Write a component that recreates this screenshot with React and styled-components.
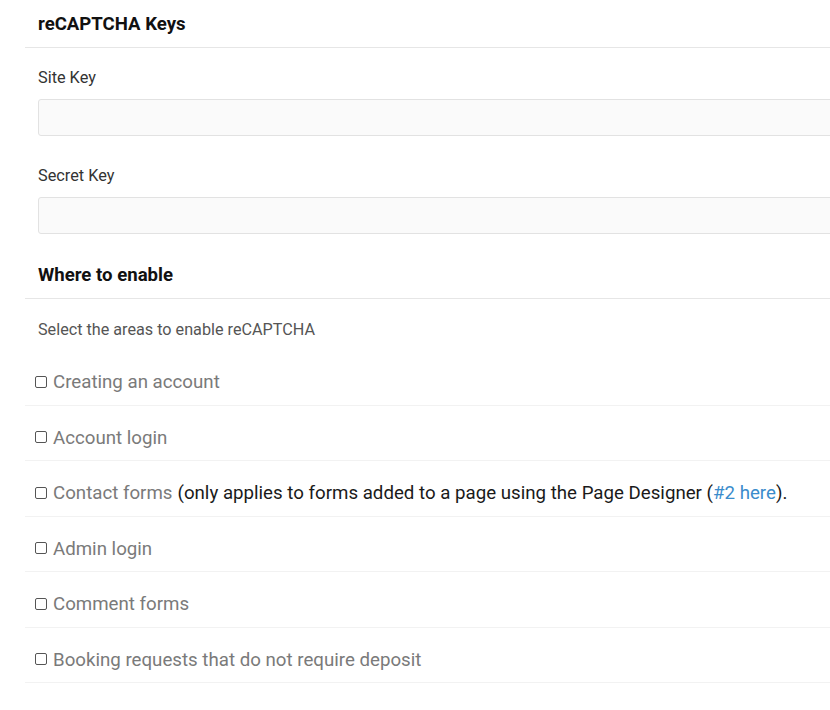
import React from "react";
import styled, { createGlobalStyle } from "styled-components";

const GlobalStyle = createGlobalStyle`
  html, body {
    margin: 0;
    padding: 0;
    background: #fff;
    overflow: hidden;
  }
  body {
    font-family: Roboto, "Liberation Sans", Arial, sans-serif;
    color: #222;
  }
`;

const areas = [
  { label: "Creating an account" },
  { label: "Account login" },
  { label: "Contact forms", note: true },
  { label: "Admin login" },
  { label: "Comment forms" },
  { label: "Booking requests that do not require deposit" },
];

const App = () => {
  return (
    <>
      <GlobalStyle />
      <Page>
        <SectionHeader>reCAPTCHA Keys</SectionHeader>
        <Field>
          <Label>Site Key</Label>
          <TextInput type="text" />
        </Field>
        <Field>
          <Label>Secret Key</Label>
          <TextInput type="text" />
        </Field>

        <SectionHeader $gap>Where to enable</SectionHeader>
        <Hint>Select the areas to enable reCAPTCHA</Hint>
        <List>
          {areas.map((a) => (
            <Row key={a.label}>
              <Check type="checkbox" />
              <RowLabel>{a.label}</RowLabel>
              {a.note && (
                <Note>
                  (only applies to forms added to a page using the Page Designer (
                  <Link href="#">#2 here</Link>).
                </Note>
              )}
            </Row>
          ))}
        </List>
      </Page>
    </>
  );
};

const Page = styled.div`
  margin-left: 25px;
  width: 880px;
`;

const SectionHeader = styled.h2`
  margin: ${(p) => (p.$gap ? "17px" : "0")} 0 0;
  padding: 13px 13px 12px;
  font-size: 18.6px;
  line-height: 22px;
  font-weight: 700;
  color: #111;
  border-bottom: 1px solid #e6e6e6;
`;

const Field = styled.div`
  display: flex;
  flex-direction: column;
  gap: 11px;
  padding: 20px 0 0 13px;
  & + & {
    padding-top: 30px;
  }
`;

const Label = styled.label`
  font-size: 16.3px;
  line-height: 20px;
  color: #333;
`;

const TextInput = styled.input`
  box-sizing: border-box;
  height: 37px;
  width: 100%;
  background: #fafafa;
  border: 1px solid #e2e2e2;
  border-radius: 3px;
  outline: none;
`;

const Hint = styled.p`
  margin: 0;
  padding: 21px 13px 10px;
  font-size: 16.2px;
  line-height: 20px;
  color: #555;
`;

const List = styled.div`
  display: flex;
  flex-direction: column;
`;

const Row = styled.div`
  display: flex;
  align-items: center;
  padding: 20px 0 10.5px 10px;
  font-size: 18.7px;
  line-height: 24px;
  border-bottom: 1px solid #f2f2f2;
  white-space: nowrap;
`;

const Check = styled.input`
  appearance: none;
  box-sizing: border-box;
  width: 12px;
  height: 12px;
  margin: 0 6px 1px 0;
  border: 1px solid #555;
  border-radius: 2px;
  background: #fff;
`;

const RowLabel = styled.span`
  color: #7a7a7a;
`;

const Note = styled.span`
  margin-left: 5px;
  color: #1a1a1a;
`;

const Link = styled.a`
  color: #3a8ccc;
  text-decoration: none;
`;

export default App;
